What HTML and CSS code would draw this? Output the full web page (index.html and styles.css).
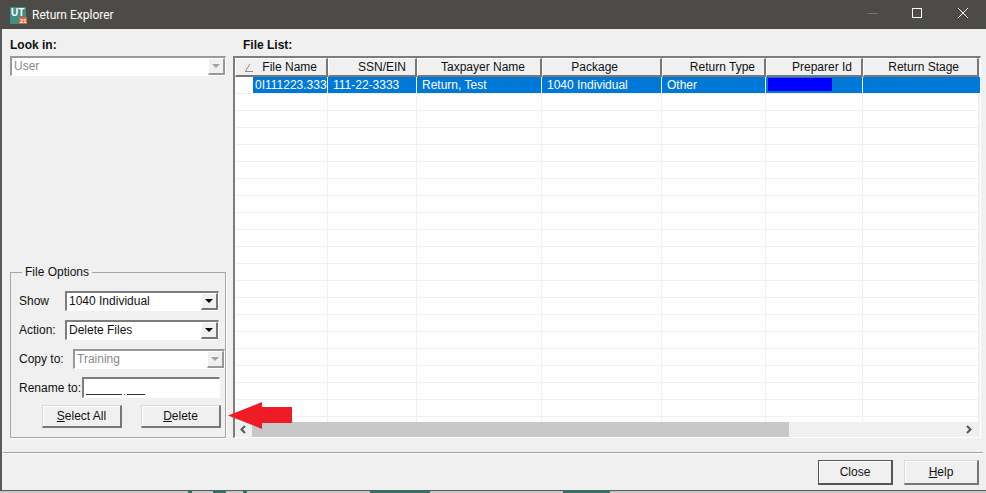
FILE: index.html
```html
<!DOCTYPE html>
<html lang="en">

<head>
    <meta charset="UTF-8">
    <title>Return Explorer</title>
    <link rel="stylesheet" href="styles.css">
</head>

<body>
    <div class="window">
        <div class="titlebar">
            <svg class="app-icon" width="17" height="18" viewBox="0 0 17 18">
                <rect width="16" height="17" y="1" rx="1" fill="#3f8f80"/>
                <text x="1" y="10" class="app-icon-text">UT</text>
                <rect x="9" y="11" width="8" height="7" fill="#e2603a"/>
                <text x="10" y="17" class="app-icon-year">21</text>
            </svg>
            <span class="title">Return Explorer</span>
            <svg class="controls" width="110" height="29" viewBox="0 0 110 29">
                <path d="M0.5 13.5H10.5" stroke="#77757a"/>
                <rect x="45.5" y="8.5" width="9" height="9" fill="none" stroke="#fff"/>
                <path d="M91 8L101 18M101 8L91 18" stroke="#fff" fill="none"/>
            </svg>
        </div>

        <div class="content">
            <div class="left-col">
                <div class="label-bold">Look in:</div>
                <div class="combo disabled">
                    <span class="combo-text">User</span>
                    <span class="combo-btn"><i class="arrow"></i></span>
                </div>

                <fieldset class="options">
                    <legend>File Options</legend>
                    <div class="opt-row">
                        <label class="w-show">Show</label>
                        <div class="combo grow-show">
                            <span class="combo-text">1040 Individual</span>
                            <span class="combo-btn"><i class="arrow"></i></span>
                        </div>
                    </div>
                    <div class="opt-row">
                        <label class="w-show">Action:</label>
                        <div class="combo grow-show">
                            <span class="combo-text">Delete Files</span>
                            <span class="combo-btn"><i class="arrow"></i></span>
                        </div>
                    </div>
                    <div class="opt-row">
                        <label class="w-copy">Copy to:</label>
                        <div class="combo disabled grow-copy">
                            <span class="combo-text">Training</span>
                            <span class="combo-btn"><i class="arrow"></i></span>
                        </div>
                    </div>
                    <div class="opt-row rename">
                        <label class="w-rename">Rename to:</label>
                        <div class="rename-input"><span class="mask"></span><span class="dot"></span><span class="mask short"></span></div>
                    </div>
                    <div class="opt-buttons">
                        <button class="btn"><u>S</u>elect All</button>
                        <button class="btn"><u>D</u>elete</button>
                    </div>
                </fieldset>
            </div>

            <div class="right-col">
                <div class="label-bold">File List:</div>
                <div class="list">
                    <div class="head">
                        <div class="hcell first">
                            <svg width="10" height="9" viewBox="0 0 10 9"><path d="M1 8.5H9M1.5 8L6 1" stroke="#8a8a8a" fill="none"/></svg>
                            <span>File Name</span>
                        </div>
                        <div class="hcell">SSN/EIN</div>
                        <div class="hcell pad-16">Taxpayer Name</div>
                        <div class="hcell pad-43">Package</div>
                        <div class="hcell">Return Type</div>
                        <div class="hcell">Preparer Id</div>
                        <div class="hcell pad-19">Return Stage</div>
                    </div>
                    <div class="row">
                        <div class="cell gutter"></div>
                        <div class="cell sel">0I111223.333</div>
                        <div class="cell sel">111-22-3333</div>
                        <div class="cell sel">Return, Test</div>
                        <div class="cell sel">1040 Individual</div>
                        <div class="cell sel">Other</div>
                        <div class="cell sel"><div class="preparer"></div></div>
                        <div class="cell sel"></div>
                    </div>
                    <div class="blank">
                        <div></div><div></div><div></div><div></div><div></div><div></div><div></div><div></div>
                    </div>
                    <div class="hscroll">
                        <svg class="sb-arrow" width="16" height="15" viewBox="0 0 16 15"><path d="M9 4L5.5 7.5L9 11" stroke="#555" stroke-width="2" fill="none"/></svg>
                        <div class="thumb"></div>
                        <svg class="sb-arrow" width="16" height="15" viewBox="0 0 16 15"><path d="M6 4L9.5 7.5L6 11" stroke="#555" stroke-width="2" fill="none"/></svg>
                    </div>
                </div>
            </div>
        </div>

        <div class="footer">
            <button class="btn foot-btn default">Close</button>
            <button class="btn foot-btn"><u>H</u>elp</button>
        </div>
    </div>

    <div class="behind">
        <i class="b1"></i><i class="b2"></i><i class="b3"></i><i class="b4"></i><i class="b5"></i>
    </div>

    <!-- red annotation arrow drawn over the dialog -->
    <svg class="red-arrow" width="66" height="28" viewBox="0 0 66 28">
        <path d="M0 13.5L34 0V5H64V21H34V27Z" fill="#ee1c25"/>
    </svg>
</body>

</html>
```

FILE: styles.css
```css
* {
    box-sizing: border-box;
}

body {
    margin: 0;
    width: 986px;
    height: 493px;
    overflow: hidden;
    position: relative;
    background-color: #c8c8c8;
    font-family: "Liberation Sans", Arial, sans-serif;
    font-size: 12px;
    color: #111;
}

.window {
    height: 491px;
    display: flex;
    flex-direction: column;
    background-color: #f0f0f0;
    border-left: 2px solid #5a5a5a;
    border-bottom: 1px solid #5a5a5a;
}

/* Title bar */
.titlebar {
    height: 29px;
    margin-left: -2px;
    padding-left: 10px;
    display: flex;
    align-items: center;
    background-color: #4d4b48;
    color: #fff;
    flex-shrink: 0;
}

.app-icon {
    margin-right: 5px;
}

.app-icon-text {
    font-family: "Liberation Sans", sans-serif;
    font-size: 10px;
    font-weight: bold;
    fill: #fff;
}

.app-icon-year {
    font-family: "Liberation Sans", sans-serif;
    font-size: 6px;
    font-weight: bold;
    fill: #fff;
}

.title {
    font-family: Roboto, sans-serif;
    font-size: 12px;
}

.controls {
    margin-left: auto;
    margin-right: 9px;
}

/* Main area */
.content {
    height: 423px;
    display: flex;
    gap: 7px;
    padding: 0 3px 14px 8px;
}

.left-col {
    width: 216px;
    display: flex;
    flex-direction: column;
}

.right-col {
    width: 748px;
    display: flex;
    flex-direction: column;
}

.label-bold {
    height: 27px;
    padding-top: 9px;
    font-weight: bold;
    line-height: 14px;
}

.right-col .label-bold {
    padding-left: 10px;
}

/* Combo boxes */
.combo {
    height: 20px;
    display: flex;
    align-items: stretch;
    background-color: #fff;
    border-top: 2px solid #7d7d7d;
    border-left: 2px solid #7d7d7d;
    border-right: 1px solid #fff;
    border-bottom: 1px solid #fff;
}

.combo-text {
    flex: 1;
    padding-left: 2px;
    line-height: 16px;
}

.combo-btn {
    width: 17px;
    display: flex;
    align-items: center;
    justify-content: center;
    background-color: #f0f0f0;
    border-top: 1px solid #fff;
    border-left: 1px solid #fff;
    border-right: 2px solid #777;
    border-bottom: 2px solid #777;
}

.arrow {
    width: 0;
    height: 0;
    border-left: 4px solid transparent;
    border-right: 4px solid transparent;
    border-top: 4px solid #000;
}

.disabled .combo-text {
    color: #8a8a8a;
}

.disabled {
    border-top-color: #999;
    border-left-color: #999;
}

.disabled .combo-btn {
    border-right-color: #999;
    border-bottom-color: #999;
}

.disabled .arrow {
    border-top-color: #a0a0a0;
}

/* File Options box */
.options {
    margin: auto 0 0;
    padding: 0 0 0 8px;
    height: 173px;
    min-width: 0;
    border: 1px solid #a6a6a6;
    box-shadow: 1px 1px 0 #fff;
}

.options legend {
    margin-left: 3px;
    padding: 0 3px;
    line-height: 14px;
}

.opt-row {
    height: 20px;
    margin-top: 9px;
    display: flex;
    align-items: center;
}

.opt-row:first-of-type {
    margin-top: 12px;
}

.opt-row label {
    flex-shrink: 0;
}

.w-show {
    width: 46px;
}

.w-copy {
    width: 54px;
}

.w-rename {
    width: 63px;
}

.grow-show {
    width: 154px;
}

.grow-copy {
    width: 154px;
}

.rename {
    margin-top: 8px;
    height: 21px;
}

.rename-input {
    width: 138px;
    height: 21px;
    padding: 0 0 2px 2px;
    display: flex;
    align-items: flex-end;
    background-color: #fff;
    border-top: 2px solid #7d7d7d;
    border-left: 2px solid #7d7d7d;
    border-right: 1px solid #fff;
    border-bottom: 1px solid #fff;
}

.mask {
    width: 36px;
    height: 1px;
    background-color: #333;
}

.mask.short {
    width: 18px;
}

.dot {
    width: 1px;
    height: 1px;
    margin: 0 2px;
    background-color: #333;
}

.opt-buttons {
    margin-top: 7px;
    padding-left: 23px;
    display: flex;
    gap: 19px;
}

.btn {
    width: 80px;
    height: 23px;
    padding: 0;
    font-family: inherit;
    font-size: 12px;
    color: #111;
    background-color: #f0f0f0;
    border-top: 1px solid #d8d8d8;
    border-left: 1px solid #d8d8d8;
    border-right: 2px solid #777;
    border-bottom: 2px solid #777;
    box-shadow: inset 1px 1px 0 #fff;
}

/* File list */
.list {
    height: 382px;
    display: flex;
    flex-direction: column;
    background-color: #fff;
    border-top: 2px solid #7d7d7d;
    border-left: 2px solid #7d7d7d;
    border-right: 1px solid #fff;
    border-bottom: 1px solid #fff;
}

.head,
.row,
.blank {
    display: grid;
    grid-template-columns: 18px 75px 89px 125px 120px 104px 97px 116px 1fr;
}

.head {
    height: 19px;
    background-color: #f0f0f0;
    flex-shrink: 0;
}

.hcell {
    padding-right: 9px;
    text-align: right;
    line-height: 16px;
    background-color: #f0f0f0;
    border-top: 1px solid #fff;
    border-left: 1px solid #fff;
    border-right: 2px solid #777;
    border-bottom: 2px solid #777;
}

.hcell.first {
    grid-column: span 2;
    padding-left: 8px;
    display: flex;
    align-items: center;
    justify-content: space-between;
}

.pad-16 {
    padding-right: 15px;
}

.pad-43 {
    padding-right: 42px;
}

.pad-19 {
    padding-right: 18px;
}

.row {
    height: 17px;
    flex-shrink: 0;
    border-bottom: 1px solid #f0f0f0;
}

.cell {
    padding: 1px 0 0 2px;
    line-height: 15px;
    color: #fff;
    white-space: nowrap;
    border-right: 1px solid #f0f0f0;
}

.cell.gutter {
    border-right: none;
}

.cell.sel {
    background-color: #0078d7;
    border-right-color: #fff;
}

.cell.sel:nth-child(n+3) {
    padding-left: 5px;
}

.row .cell.sel:last-child {
    grid-column: span 2;
    border-right: none;
}

.preparer {
    width: 64px;
    height: 13px;
    margin: 0 0 0 -3px;
    background-color: #0000ff;
}

.blank {
    flex: 1;
    background: repeating-linear-gradient(to bottom, #fff 0, #fff 16px, #f0f0f0 16px, #f0f0f0 17px);
}

.blank div {
    border-right: 1px solid #f0f0f0;
}

.blank div:first-child {
    grid-column: span 2;
}

.hscroll {
    height: 15px;
    flex-shrink: 0;
    display: flex;
    background-color: #f0f0f0;
}

.sb-arrow {
    flex-shrink: 0;
    margin-left: 1px;
}

.thumb {
    width: 537px;
    background-color: #c8c8c8;
    margin-right: auto;
}

.hscroll svg:last-child {
    margin-right: 3px;
}

/* Footer buttons */
.footer {
    flex: 1;
    margin-right: 3px;
    margin-left: 1px;
    padding: 7px 4px 0 0;
    display: flex;
    justify-content: flex-end;
    gap: 11px;
    border-top: 1px solid #a0a0a0;
    box-shadow: inset 0 1px 0 #fff;
}

.foot-btn {
    width: 75px;
    height: 25px;
}

.foot-btn.default {
    border: 1px solid #555;
    border-right-width: 2px;
    border-bottom-width: 2px;
}

/* whatever sits behind the dialog, only the top pixels show */
.behind {
    height: 2px;
    display: flex;
}

.behind i {
    height: 2px;
    background-color: #2f7468;
}

.b1 {
    width: 4px;
    margin-left: 188px;
}

.b2 {
    width: 13px;
    margin-left: 21px;
}

.b3 {
    width: 4px;
    margin-left: 17px;
}

.b4 {
    width: 60px;
    margin-left: 123px;
}

.b5 {
    width: 47px;
    margin-left: 133px;
}

.red-arrow {
    position: absolute;
    left: 228px;
    top: 402px;
}
```
